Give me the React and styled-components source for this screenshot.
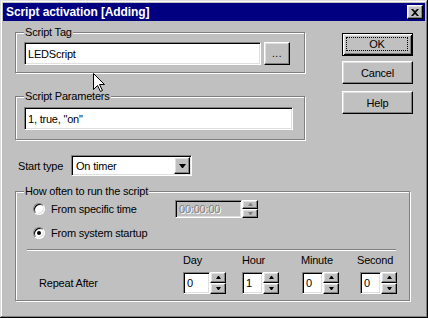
import styled, { createGlobalStyle } from 'styled-components';

const GlobalStyle = createGlobalStyle`
  html, body {
    margin: 0;
    padding: 0;
    background: #c0c0c0;
  }
  body {
    font-family: "Liberation Sans", Arial, sans-serif;
    font-size: 11px;
    letter-spacing: -0.2px;
    color: #000;
  }
`;

const sunken = `
  box-sizing: border-box;
  border: 1px solid;
  border-color: #808080 #fff #fff #808080;
  box-shadow: inset 1px 1px #000, inset -1px -1px #dfdfdf;
`;

const raised = `
  box-sizing: border-box;
  border: 1px solid;
  border-color: #fff #000 #000 #fff;
  box-shadow: inset -1px -1px #808080, inset 1px 1px #dfdfdf;
  background: #c0c0c0;
`;

const Window = styled.div`
  position: relative;
  width: 428px;
  height: 318px;
  box-sizing: border-box;
  padding: 3px;
  background: #c0c0c0;
  box-shadow: inset -1px -1px #000, inset 1px 1px #dfdfdf,
    inset -2px -2px #808080, inset 2px 2px #fff;
  display: flex;
  flex-direction: column;
`;

const TitleBar = styled.div`
  height: 18px;
  background: #000080;
  color: #fff;
  display: flex;
  align-items: center;
  justify-content: space-between;
  padding: 0 2px 0 3px;
  font-weight: bold;
  font-size: 12px;
  letter-spacing: -0.1px;
`;

const CloseButton = styled.div`
  ${raised}
  width: 16px;
  height: 14px;
  display: flex;
  align-items: center;
  justify-content: center;
`;

const Body = styled.div`
  display: flex;
  flex-direction: column;
  padding: 5px 0 0 12px;
`;

const TopRow = styled.div`
  display: flex;
`;

const LeftCol = styled.div`
  width: 290px;
  display: flex;
  flex-direction: column;
`;

const ButtonCol = styled.div`
  margin-left: 37px;
  width: 71px;
  padding-top: 7px;
  display: flex;
  flex-direction: column;
`;

const PushButton = styled.div`
  ${raised}
  height: 23px;
  margin-top: ${p => p.mt || 0}px;
  display: flex;
  align-items: center;
  justify-content: center;
  ${p => p.isDefault ? `
    border: 1px solid #000;
    box-shadow: inset 1px 1px #fff, inset -1px -1px #000,
      inset 2px 2px #dfdfdf, inset -2px -2px #808080;
  ` : ''}
`;

const FocusRect = styled.span`
  flex: 1;
  align-self: stretch;
  margin: 3px 4px 4px 3px;
  border: 1px dotted #000;
  display: flex;
  align-items: center;
  justify-content: center;
`;

const GroupBox = styled.fieldset`
  margin: ${p => p.mt || 0}px 0 0 0;
  min-inline-size: 0;
  width: ${p => p.width}px;
  box-sizing: border-box;
  padding: ${p => p.pad};
  border: 1px solid #808080;
  box-shadow: inset 1px 1px #fff, 1px 1px #fff;
`;

const Legend = styled.legend`
  padding: 0 1px;
  line-height: 13px;
  background: #c0c0c0;
`;

const FieldRow = styled.div`
  display: flex;
  gap: 3px;
`;

const TextField = styled.div`
  ${sunken}
  width: ${p => p.width}px;
  height: ${p => p.height || 23}px;
  background: ${p => p.disabled ? '#c0c0c0' : '#fff'};
  color: ${p => p.disabled ? '#808080' : '#000'};
  ${p => p.disabled ? 'text-shadow: 1px 1px #fff;' : ''}
  display: flex;
  align-items: center;
  padding-left: 3px;
  white-space: nowrap;
`;

const BrowseButton = styled.div`
  ${raised}
  width: 26px;
  height: 23px;
  display: flex;
  align-items: flex-end;
  justify-content: center;
  padding-bottom: 5px;
  font-size: 10px;
  letter-spacing: 0.5px;
`;

const StartRow = styled.div`
  margin-top: 15px;
  height: 21px;
  display: flex;
  align-items: center;
`;

const StartLabel = styled.span`
  width: 53px;
  padding-left: 3px;
`;

const Combo = styled.div`
  ${sunken}
  width: 121px;
  height: 21px;
  background: #fff;
  display: flex;
  align-items: center;
  justify-content: space-between;
  padding: 0 1px 0 4px;
`;

const DropButton = styled.div`
  ${raised}
  width: 16px;
  height: 17px;
  display: flex;
  align-items: center;
  justify-content: center;
`;

const Arrow = styled.span`
  width: 1px;
  height: 0;
  border-left: ${p => p.size === 'big' ? 3 : 2}px solid transparent;
  border-right: ${p => p.size === 'big' ? 3 : 2}px solid transparent;
  ${p => p.dir === 'up' ? 'border-bottom' : 'border-top'}: ${p => p.size === 'big' ? 4 : 3}px solid ${p => p.disabled ? '#808080' : '#000'};
`;

const RadioRow = styled.div`
  height: 20px;
  margin-top: ${p => p.mt || 0}px;
  padding-left: 9px;
  display: flex;
  align-items: center;
`;

const Radio = styled.span`
  position: relative;
  width: 12px;
  height: 12px;
  box-sizing: border-box;
  border-radius: 50%;
  border: 1px solid;
  border-color: #808080 #fff #fff #808080;
  box-shadow: inset 1px 1px #000, inset -1px -1px #dfdfdf;
  background: #fff;
  &::after {
    content: '';
    display: ${p => p.checked ? 'block' : 'none'};
    position: absolute;
    left: 3px;
    top: 3px;
    width: 4px;
    height: 4px;
    border-radius: 50%;
    background: #000;
  }
`;

const RadioLabel = styled.span`
  margin-left: 6px;
  width: ${p => p.width ? `${p.width}px` : 'auto'};
`;

const Spinner = styled.div`
  display: flex;
`;

const SpinButtons = styled.div`
  width: 16px;
  display: flex;
  flex-direction: column;
`;

const SpinButton = styled.div`
  ${raised}
  height: ${p => p.h}px;
  display: flex;
  align-items: center;
  justify-content: center;
`;

const Separator = styled.div`
  margin: 6px 0 0 3px;
  height: 0;
  border-top: 1px solid #808080;
  border-bottom: 1px solid #fff;
`;

const RepeatGrid = styled.div`
  margin-top: 3px;
  display: grid;
  grid-template-columns: 159px 59px 60px 58px 37px;
  grid-template-rows: 13px 22px;
  row-gap: 5px;
  line-height: 13px;
`;

const Cell = styled.div`
  grid-row: ${p => p.row};
  grid-column: ${p => p.col};
  display: flex;
  align-items: center;
  ${p => p.indent ? `padding-left: ${p.indent}px;` : ''}
  ${p => p.shift ? `margin-left: ${p.shift}px;` : ''}
`;

const Cursor = styled.svg`
  position: absolute;
  left: 93px;
  top: 73px;
`;

const SpinBox = ({ value, width, height = 22, disabled }) => {
  const h = height / 2;
  return (
    <Spinner>
      <TextField width={width} height={height} disabled={disabled}>{value}</TextField>
      <SpinButtons>
        <SpinButton h={h}><Arrow dir="up" disabled={disabled} /></SpinButton>
        <SpinButton h={h}><Arrow dir="down" disabled={disabled} /></SpinButton>
      </SpinButtons>
    </Spinner>
  );
};

const units = [
  { label: 'Day', value: '0', width: 27, shift: 0 },
  { label: 'Hour', value: '1', width: 21, shift: 0 },
  { label: 'Minute', value: '0', width: 21, shift: -1 },
  { label: 'Second', value: '0', width: 21, shift: -3 },
];

export default function App() {
  return (
    <>
      <GlobalStyle />
      <Window>
        <TitleBar>
          <span>Script activation [Adding]</span>
          <CloseButton>
            <svg width="8" height="7" viewBox="0 0 8 7">
              <path d="M0 0h2l2 2 2-2h2L5 3.5 8 7H6L4 5 2 7H0l3-3.5z" fill="#000" />
            </svg>
          </CloseButton>
        </TitleBar>
        <Body>
          <TopRow>
            <LeftCol>
              <GroupBox width={290} pad="3px 8px 7px 8px">
                <Legend>Script Tag</Legend>
                <FieldRow>
                  <TextField width={237}>LEDScript</TextField>
                  <BrowseButton>...</BrowseButton>
                </FieldRow>
              </GroupBox>
              <GroupBox width={290} mt={17} pad="4px 8px 9px 8px">
                <Legend>Script Parameters</Legend>
                <TextField width={269}>1, true, "on"</TextField>
              </GroupBox>
              <StartRow>
                <StartLabel>Start type</StartLabel>
                <Combo>
                  <span>On timer</span>
                  <DropButton><Arrow dir="down" size="big" /></DropButton>
                </Combo>
              </StartRow>
            </LeftCol>
            <ButtonCol>
              <PushButton isDefault><FocusRect>OK</FocusRect></PushButton>
              <PushButton mt={5}>Cancel</PushButton>
              <PushButton mt={7}>Help</PushButton>
            </ButtonCol>
          </TopRow>
          <GroupBox width={395} mt={9} pad="1px 13px 6px 8px">
            <Legend>How often to run the script</Legend>
            <RadioRow>
              <Radio />
              <RadioLabel width={124}>From specific time</RadioLabel>
              <SpinBox value="00:00:00" width={67} height={18} disabled />
            </RadioRow>
            <RadioRow mt={4}>
              <Radio checked />
              <RadioLabel>From system startup</RadioLabel>
            </RadioRow>
            <Separator />
            <RepeatGrid>
              <Cell row={2} col={1} indent={15}>Repeat After</Cell>
              {units.map((u, i) => (
                <Cell key={u.label} row={1} col={i + 2} shift={u.shift}>{u.label}</Cell>
              ))}
              {units.map((u, i) => (
                <Cell key={u.label + '-spin'} row={2} col={i + 2}>
                  <SpinBox value={u.value} width={u.width} />
                </Cell>
              ))}
            </RepeatGrid>
          </GroupBox>
        </Body>
        <Cursor width="13" height="20" viewBox="0 0 13 20">
          <path d="M0.5 0.5V16.5L4.5 12.5L7.5 18.5L9.5 17.5L6.5 11.5H11.5Z" fill="#fff" stroke="#000" strokeWidth="1" />
        </Cursor>
      </Window>
    </>
  );
}
